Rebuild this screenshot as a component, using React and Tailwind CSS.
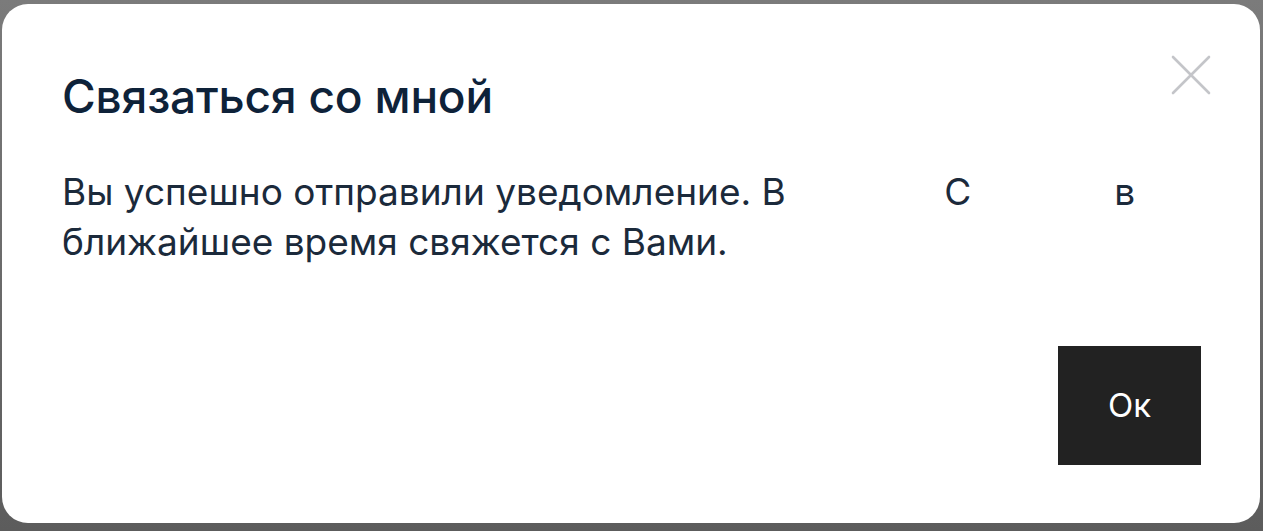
export default function App() {
  return (
    <div className="h-[531px] w-full bg-gradient-to-b from-[#7b7b7b] to-[#5c5c5c] pt-[4px] pl-[2px] pr-[3px] pb-[8px] font-['Inter','Noto_Sans',sans-serif]">
      <div className="relative flex h-full flex-col rounded-[26px] bg-white pl-[60px] pr-[59px] pt-[62px] pb-[58px]">
        <button className="absolute right-[49px] top-[51px]">
          <svg width="40" height="40" viewBox="0 0 40 40" fill="none" stroke="#c4c5c9" strokeWidth="2.6" strokeLinecap="round">
            <path d="M2 2L38 38M38 2L2 38" />
          </svg>
        </button>

        <h2 className="text-[46px] font-medium leading-[60px] tracking-[-0.2px] text-[#0e2239]">Связаться со мной</h2>

        {/* redacted words left blank, as in the screenshot */}
        <div className="mt-[41px] flex flex-col text-[37px] leading-[50px] text-[#1b2a3b]">
          <div className="flex whitespace-pre">
            <span>Вы успешно отправили уведомление. В </span>
            <span className="w-[148px]" />
            <span>С</span>
            <span className="w-[143px]" />
            <span>в</span>
          </div>
          <span>ближайшее время свяжется с Вами.</span>
        </div>

        <div className="mt-auto flex justify-end">
          <button className="flex h-[119px] w-[143px] items-center justify-center bg-[#222222] text-[33px] text-white">
            Ок
          </button>
        </div>
      </div>
    </div>
  )
}
